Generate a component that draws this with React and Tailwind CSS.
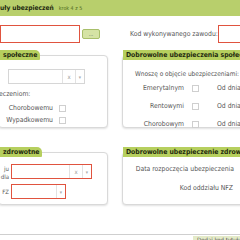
import React from 'react'

const font = { fontFamily: '"DejaVu Sans Condensed", "DejaVu Sans", Verdana, sans-serif', fontStretch: 'semi-condensed' }

function Tab({ children, className = '' }) {
  return (
    <div className={`relative z-10 block h-[10px] w-fit rounded-tr-[5px] rounded-br-[1px] bg-[#b6cf5e] px-[3px] text-[6.8px] font-bold leading-[10px] text-[#1f2a10] ${className}`}>
      {children}
    </div>
  )
}

function Box({ className = '', children }) {
  return (
    <div className={`-mt-[5px] rounded-[4px] border border-[#d9d9d9] bg-white shadow-[0_1px_2px_rgba(0,0,0,0.12)] ${className}`}>
      {children}
    </div>
  )
}

function Check() {
  return <div className="h-[7px] w-[7px] border border-[#cfcfcf] bg-white" />
}

function Select({ width, red, clear = true }) {
  return (
    <div className={`flex h-[15px] border ${red ? 'border-[#e0533f]' : 'border-[#d6d6d6]'}`} style={{ width }}>
      <div className="flex-1" />
      {clear && (
        <div className="flex w-[13px] items-center justify-center border-l border-[#e2e2e2] text-[6px] text-[#999]">x</div>
      )}
      <div className="flex w-[9px] items-center justify-center border-l border-[#e2e2e2] text-[5px] text-[#aaa]">▾</div>
    </div>
  )
}

export default function App() {
  return (
    <div className="relative h-[240px] w-[240px] overflow-hidden bg-white text-[7px] leading-[8px] text-[#555]" style={font}>
      <div className="flex h-[16px] items-center bg-[#b8cf6c]">
        <span className="text-[6.6px] font-bold text-[#1f2a10]">uły ubezpieczeń</span>
        <span className="ml-[5px] text-[5.3px] text-[#4f6a1c]">krok 4 z 5</span>
      </div>

      <div className="mt-[9px] flex h-[18px] items-center">
        <div className="h-[18px] w-[80px] shrink-0 border border-[#e0533f] bg-white" />
        <div className="ml-[2px] flex h-[10px] w-[18px] shrink-0 items-center justify-center rounded-[2px] border border-[#a8bf6a] bg-[#d5e3a4] text-[5px] leading-none text-[#445]">...</div>
        <span className="ml-[30px] w-[86px] shrink-0 whitespace-nowrap text-[6.8px]">Kod wykonywanego zawodu:</span>
        <div className="ml-[2px] h-[18px] w-[40px] shrink-0 border border-[#e0533f]" />
      </div>

      <div className="mt-[7px] flex gap-[14px]">
        <div className="w-[108px] shrink-0">
          <Tab>społeczne</Tab>
          <Box className="h-[73px] -ml-[2px]">
            <div className="ml-[9px] mt-[13px]">
              <Select width={77} />
            </div>
            <div className="mt-[6px] text-[6.8px] leading-[8px]">eczeniom:</div>
            <div className="mt-[6px] flex flex-col gap-[4px] text-[6.8px]">
              {['Chorobowemu', 'Wypadkowemu'].map((l) => (
                <div key={l} className="flex items-center">
                  <span className="w-[54px] text-right leading-[8px]">{l}</span>
                  <span className="ml-[6px]"><Check /></span>
                </div>
              ))}
            </div>
          </Box>
        </div>
        <div className="w-[140px] shrink-0">
          <Tab className="ml-[1px] whitespace-nowrap">Dobrowolne ubezpieczenia społeczne</Tab>
          <Box className="h-[73px]">
            <div className="ml-[12px] mt-[14px] whitespace-nowrap text-[6.5px] leading-[8px]">Wnoszę o objęcie ubezpieczeniami:</div>
            <div className="mt-[6px] flex flex-col gap-[10px] text-[6.8px]">
              {['Emerytalnym', 'Rentowymi', 'Chorobowym'].map((l) => (
                <div key={l} className="flex items-center leading-[8px]">
                  <span className="w-[61px] text-right">{l}</span>
                  <span className="ml-[8px]"><Check /></span>
                  <span className="ml-[18px] whitespace-nowrap">Od dnia</span>
                </div>
              ))}
            </div>
          </Box>
        </div>
      </div>

      <div className="mt-[19px] flex gap-[14px]">
        <div className="w-[108px] shrink-0">
          <Tab>zdrowotne</Tab>
          <Box className="h-[53px] -ml-[2px]">
            <div className="mt-[11px] flex">
              <div className="w-[10px] pt-[1px] text-right text-[6px] leading-[8px]">ju<br />dla</div>
              <div className="ml-[2px]"><Select width={81} red /></div>
            </div>
            <div className="mt-[3px] flex">
              <div className="flex w-[10px] items-center justify-end text-[6px]">FZ</div>
              <div className="ml-[2px]"><Select width={55} red clear={false} /></div>
            </div>
          </Box>
        </div>
        <div className="w-[140px] shrink-0">
          <Tab className="ml-[1px] whitespace-nowrap">Dobrowolne ubezpieczenie zdrowotne</Tab>
          <Box className="h-[53px]">
            <div className="mt-[12px] w-[111px] whitespace-nowrap text-right text-[6.8px] leading-[8px]">Data rozpoczęcia ubezpieczenia</div>
            <div className="mt-[11px] w-[110px] whitespace-nowrap text-right text-[6.8px] leading-[8px]">Kod oddziału NFZ</div>
          </Box>
        </div>
      </div>

      <div className="mt-[29px] border-t border-[#cfcfcf]">
        <div className="ml-[193px] mt-[1px] h-[8px] whitespace-nowrap bg-[#e4ebc8] pl-[4px] text-[6px] leading-[8px] text-[#555]">Dodaj kod tytułu</div>
      </div>
    </div>
  )
}
